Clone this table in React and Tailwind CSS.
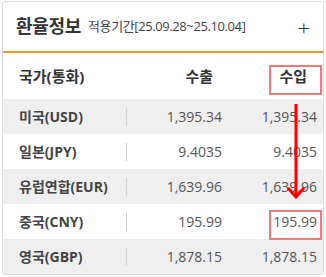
import React from 'react';

const rates = [
  { name: '미국(USD)', sell: '1,395.34', buy: '1,395.34' },
  { name: '일본(JPY)', sell: '9.4035', buy: '9.4035' },
  { name: '유럽연합(EUR)', sell: '1,639.96', buy: '1,639.96' },
  { name: '중국(CNY)', sell: '195.99', buy: '195.99' },
  { name: '영국(GBP)', sell: '1,878.15', buy: '1,878.15' },
];

const App = () => {
  return (
    <div className="w-[326px] h-[277px] bg-white pt-[1px] pl-[2px] font-['Open_Sans','Noto_Sans_CJK_KR',sans-serif]">
      <div className="relative w-[322px] border border-[#dcdcdc] rounded-[3px] overflow-hidden">
        {/* Header */}
        <div className="h-[51px] flex items-center pl-[13px] pr-[13px] border-b-2 border-[#f39322]">
          <span className="text-[18px] font-bold text-[#333] tracking-[-0.3px]">환율정보</span>
          <span className="ml-[7px] text-[13px] text-[#444] tracking-[-0.4px]">적용기간[25.09.28~25.10.04]</span>
          <span className="ml-auto text-[22px] leading-none text-[#333] font-light">+</span>
        </div>

        {/* Column titles */}
        <div className="h-[46px] flex items-center text-[15px] font-bold text-[#333]">
          <div className="w-[123px] pl-[16px]">국가(통화)</div>
          <div className="w-[87px] text-right">수출</div>
          <div className="w-[94px] text-right">수입</div>
        </div>

        {/* Rows */}
        {rates.map((r, i) => (
          <div
            key={r.name}
            className={`h-[35px] flex items-center text-[14px] ${i % 2 === 0 ? 'bg-[#efefef]' : 'bg-white'}`}
          >
            <div className="w-[123px] pl-[16px] font-bold text-[#444]">{r.name}</div>
            <div className="w-px h-[18px] bg-[#d0d0d0]" />
            <div className="w-[95px] text-right text-[#555]">{r.sell}</div>
            <div className="w-[95px] text-right text-[#555]">{r.buy}</div>
          </div>
        ))}

        {/* Highlight boxes */}
        <div className="absolute left-[266px] top-[63px] w-[53px] h-[30px] border-2 border-[#f47878]" />
        <div className="absolute left-[266px] top-[208px] w-[53px] h-[30px] border-2 border-[#f47878]" />

        {/* Arrow */}
        <svg className="absolute left-[283px] top-[100px]" width="20" height="98" viewBox="0 0 20 98">
          <line x1="10" y1="2" x2="10" y2="95" stroke="#ff0000" strokeWidth="3" />
          <polyline points="2,86 10,95 18,86" fill="none" stroke="#ff0000" strokeWidth="3" />
        </svg>
      </div>
    </div>
  );
};

export default App;
